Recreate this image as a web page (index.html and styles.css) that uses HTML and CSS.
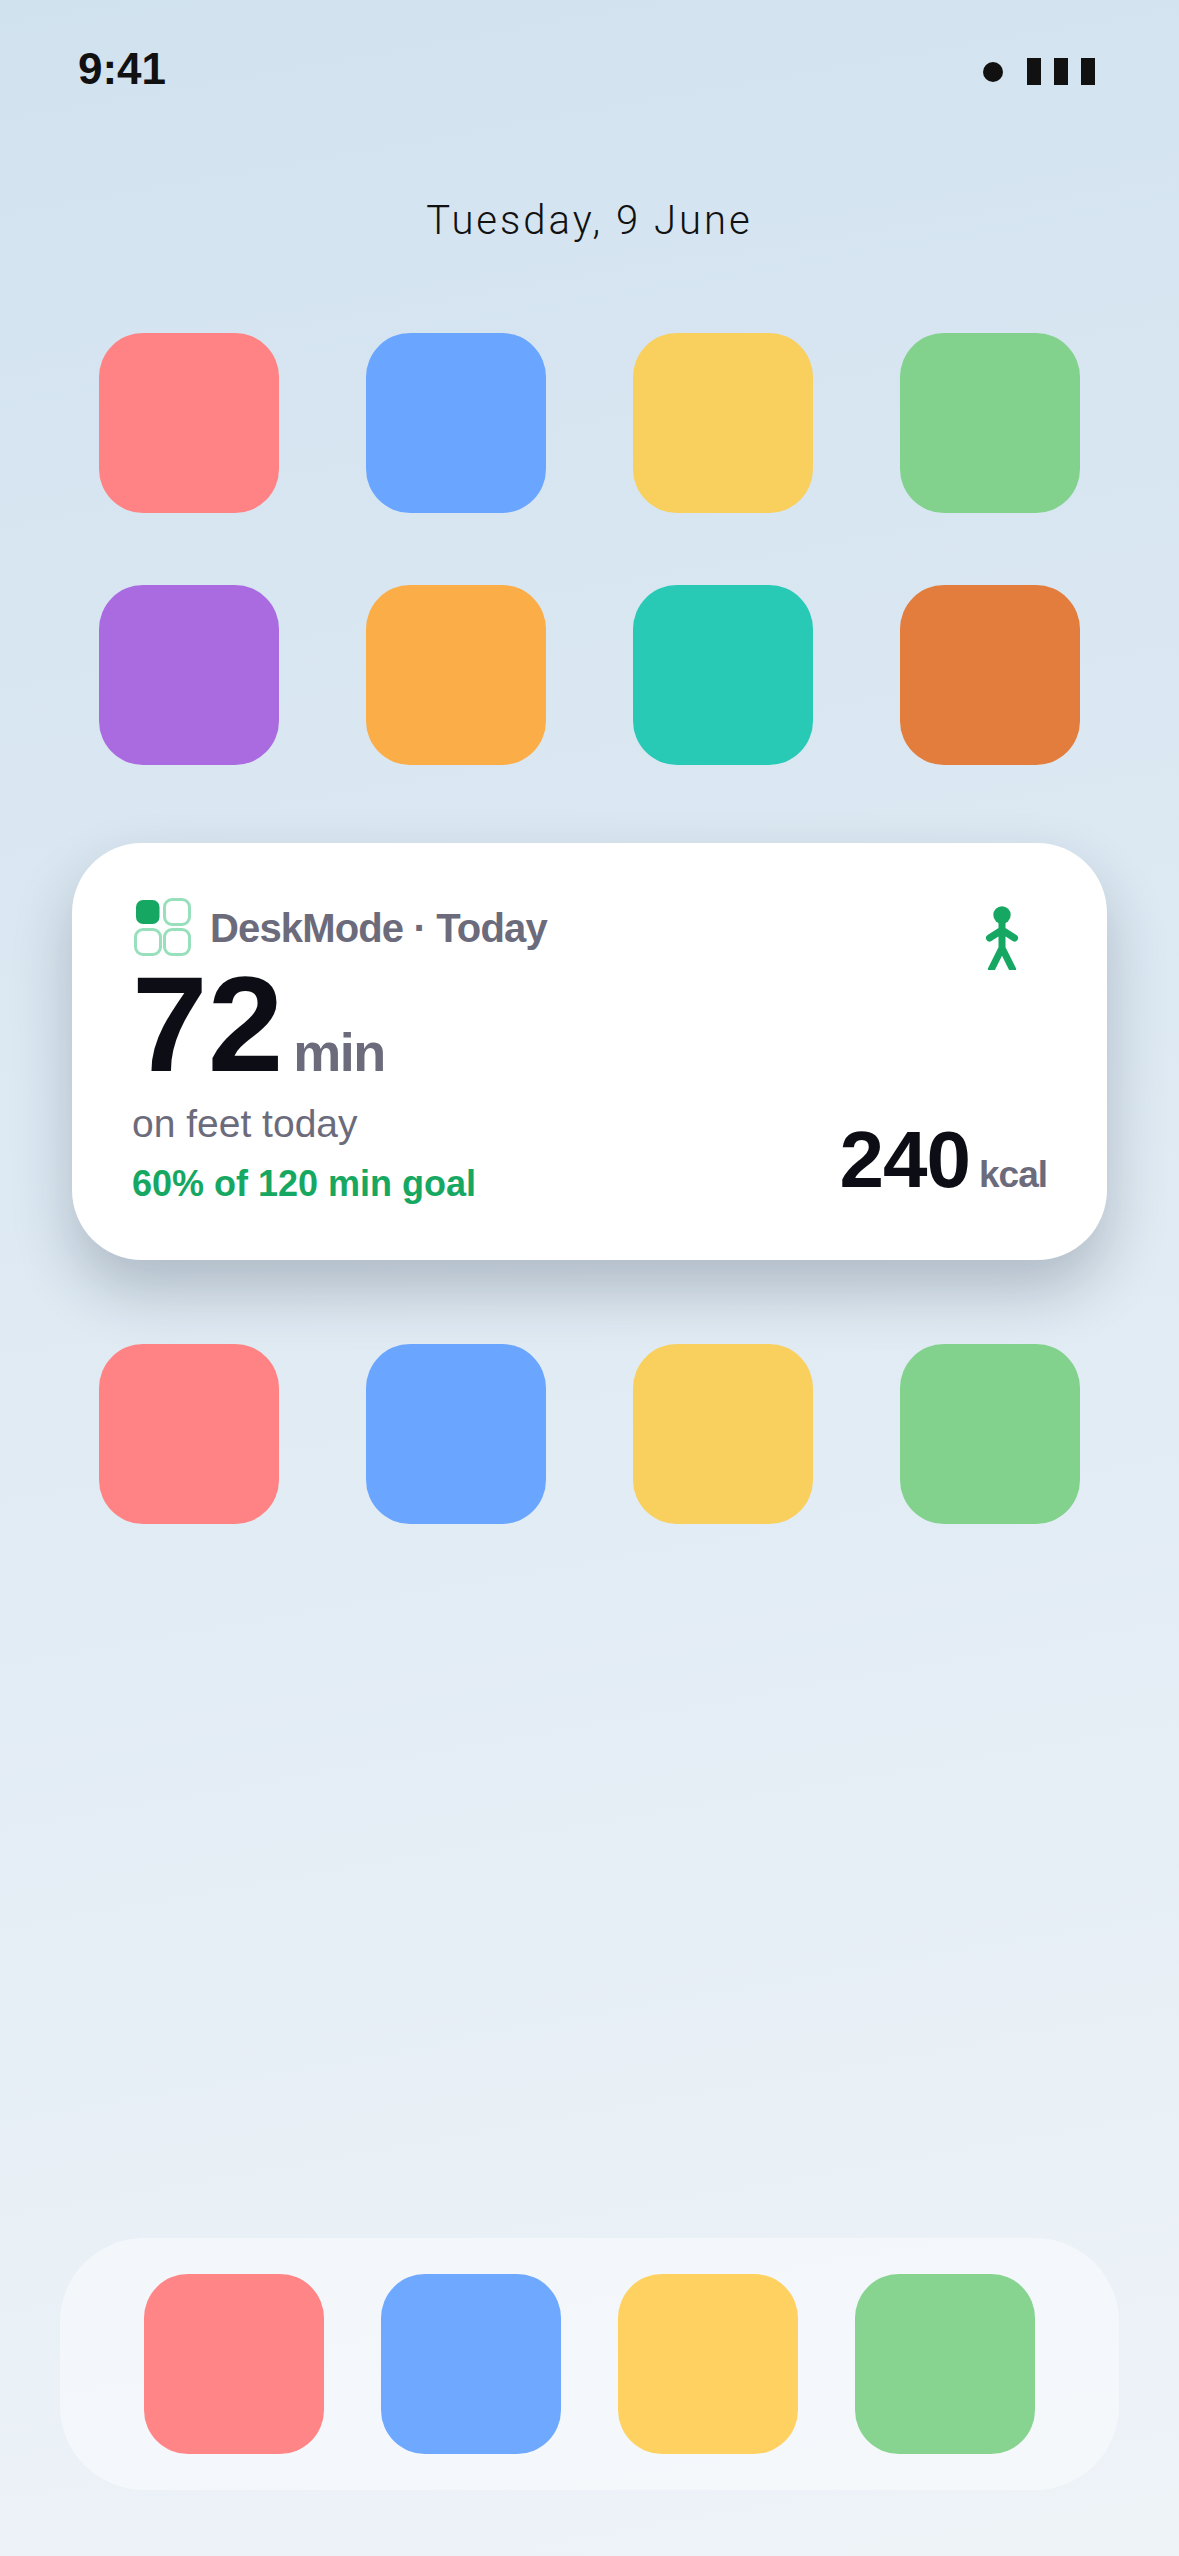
FILE: index.html
```html
<!DOCTYPE html>
<html lang="en">
<head>
    <meta charset="UTF-8">
    <meta name="viewport" content="width=device-width, initial-scale=1.0">
    <title>Home Screen</title>
    <link rel="stylesheet" href="styles.css">
</head>
<body>
    <div class="status-bar">
        <span class="status-time">9:41</span>
        <div class="status-icons">
            <span class="status-dot"></span>
            <div class="status-bars">
                <span class="status-bar-item"></span>
                <span class="status-bar-item"></span>
                <span class="status-bar-item"></span>
            </div>
        </div>
    </div>

    <div class="date">Tuesday, 9 June</div>

    <div class="app-grid">
        <div class="app app-red"></div>
        <div class="app app-blue"></div>
        <div class="app app-yellow"></div>
        <div class="app app-green"></div>
        <div class="app app-purple"></div>
        <div class="app app-orange"></div>
        <div class="app app-teal"></div>
        <div class="app app-rust"></div>
    </div>

    <div class="widget">
        <div class="widget-header">
            <div class="widget-brand">
                <svg class="brand-logo" viewBox="0 0 60 60" aria-hidden="true">
                    <rect x="4" y="3" width="23.500" height="24" rx="7" fill="#16a862"/>
                    <rect x="32.500" y="2.500" width="25" height="25" rx="7.500" fill="none" stroke="#98dfbc" stroke-width="3"/>
                    <rect x="3.500" y="32.500" width="25" height="25" rx="7.500" fill="none" stroke="#98dfbc" stroke-width="3"/>
                    <rect x="32.500" y="32.500" width="25" height="25" rx="7.500" fill="none" stroke="#98dfbc" stroke-width="3"/>
                </svg>
                <span class="widget-title">DeskMode · Today</span>
            </div>
            <!-- walking figure -->
            <svg class="walker" viewBox="0 0 60 72" aria-hidden="true">
                <circle cx="30" cy="17" r="8.700" fill="#16a862"/>
                <path d="M30 20V51M17.500 40L30 32L42.500 40M19.500 71L30 50L40.500 71" fill="none" stroke="#16a862" stroke-width="7" stroke-linecap="round" stroke-linejoin="round"/>
            </svg>
        </div>

        <div class="widget-main">
            <span class="main-value">72</span>
            <span class="main-unit">min</span>
        </div>

        <div class="widget-footer">
            <div class="footer-left">
                <div class="footer-label">on feet today</div>
                <div class="footer-goal">60% of 120 min goal</div>
            </div>
            <div class="footer-right">
                <span class="kcal-value">240</span>
                <span class="kcal-unit">kcal</span>
            </div>
        </div>
    </div>

    <div class="app-row">
        <div class="app app-red"></div>
        <div class="app app-blue"></div>
        <div class="app app-yellow"></div>
        <div class="app app-green"></div>
    </div>

    <div class="dock">
        <div class="app dock-red"></div>
        <div class="app dock-blue"></div>
        <div class="app dock-yellow"></div>
        <div class="app dock-green"></div>
    </div>
</body>
</html>
```

FILE: styles.css
```css
* {
    margin: 0;
    padding: 0;
    box-sizing: border-box;
}

body {
    width: 1179px;
    height: 2556px;
    overflow: hidden;
    display: flex;
    flex-direction: column;
    font-family: 'Liberation Sans', Arial, sans-serif;
    background: linear-gradient(170deg, #d1e2ef 0%, #eef3f8 100%);
}

.status-bar {
    height: 91px;
    padding: 47px 84px 0 78px;
    display: flex;
    justify-content: space-between;
    align-items: flex-start;
}

.status-time {
    font-size: 44px;
    line-height: 44px;
    font-weight: bold;
    color: #111111;
}

.status-icons {
    display: flex;
    align-items: center;
    gap: 24px;
    margin-top: 11px;
}

.status-dot {
    width: 20px;
    height: 20px;
    border-radius: 50%;
    background: #111111;
}

.status-bars {
    display: flex;
    gap: 13px;
}

.status-bar-item {
    width: 14px;
    height: 27px;
    background: #111111;
}

.date {
    margin-top: 110px;
    font-family: Roboto, 'Liberation Sans', sans-serif;
    font-size: 40px;
    line-height: 40px;
    font-weight: 300;
    letter-spacing: 3px;
    text-align: center;
    color: #111111;
}

.app-grid {
    margin-top: 92px;
    padding: 0 99px;
    display: grid;
    grid-template-columns: repeat(4, 180px);
    column-gap: 87px;
    row-gap: 72px;
}

.app {
    width: 180px;
    height: 180px;
    border-radius: 44px;
}

.app-red { background: #ff8384; }
.app-blue { background: #6aa6ff; }
.app-yellow { background: #f9cf5d; }
.app-green { background: #82d28e; }
.app-purple { background: #ab6be0; }
.app-orange { background: #fbad47; }
.app-teal { background: #28c9b5; }
.app-rust { background: #e27d3d; }

.dock-red { background: #ff8587; }
.dock-blue { background: #6ea9ff; }
.dock-yellow { background: #ffd160; }
.dock-green { background: #86d48f; }

.widget {
    margin: 78px 72px 0;
    padding: 54px 60px 58px;
    background: #ffffff;
    border-radius: 70px;
    box-shadow: 0 30px 60px rgba(20, 35, 50, 0.24);
}

.widget-header {
    display: flex;
    justify-content: space-between;
    align-items: flex-start;
    height: 60px;
}

.widget-brand {
    display: flex;
    align-items: center;
    gap: 18px;
}

.brand-logo {
    width: 60px;
    height: 60px;
}

.widget-title {
    font-size: 40px;
    line-height: 40px;
    font-weight: bold;
    letter-spacing: -0.85px;
    color: #6b6b7b;
    margin-top: 2px;
}

.walker {
    width: 60px;
    height: 72px;
    margin-right: 15px;
    margin-top: 1px;
}

.widget-main {
    display: flex;
    align-items: baseline;
    gap: 10px;
    height: 134px;
}

.main-value {
    font-size: 136px;
    line-height: 134px;
    font-weight: bold;
    color: #0d0d16;
}

.main-unit {
    font-size: 54px;
    line-height: 54px;
    font-weight: bold;
    letter-spacing: -1.5px;
    color: #6b6b7b;
}

.widget-footer {
    display: flex;
    justify-content: space-between;
    align-items: flex-end;
    margin-top: 14px;
}

.footer-label {
    font-size: 39px;
    line-height: 38px;
    color: #6b6b7b;
}

.footer-goal {
    margin-top: 23px;
    font-size: 36px;
    line-height: 36px;
    font-weight: bold;
    color: #16a862;
}

.footer-right {
    display: flex;
    align-items: baseline;
    gap: 9px;
    margin-bottom: 2px;
}

.kcal-value {
    font-size: 80px;
    line-height: 80px;
    font-weight: bold;
    letter-spacing: -1px;
    color: #0d0d16;
}

.kcal-unit {
    font-size: 37px;
    line-height: 36px;
    font-weight: bold;
    letter-spacing: -1px;
    color: #6b6b7b;
}

.app-row {
    margin-top: 84px;
    padding: 0 99px;
    display: flex;
    gap: 87px;
}

.dock {
    margin: auto 60px 66px;
    height: 252px;
    padding: 36px 84px;
    display: flex;
    gap: 57px;
    border-radius: 84px;
    background: rgba(255, 255, 255, 0.45);
}
```
